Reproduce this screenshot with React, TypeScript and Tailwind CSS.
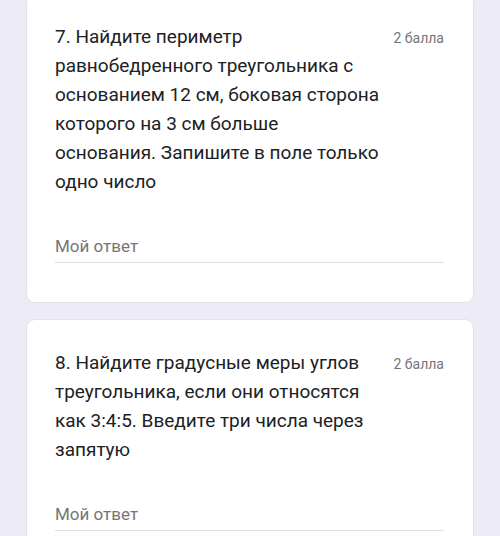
const questions = [
  {
    id: 7,
    lines: [
      "7. Найдите периметр",
      "равнобедренного треугольника с",
      "основанием 12 см, боковая сторона",
      "которого на 3 см больше",
      "основания. Запишите в поле только",
      "одно число",
    ],
    points: "2 балла",
  },
  {
    id: 8,
    lines: [
      "8. Найдите градусные меры углов",
      "треугольника, если они относятся",
      "как 3:4:5. Введите три числа через",
      "запятую",
    ],
    points: "2 балла",
  },
];

function QuestionCard({ lines, points }: { lines: string[]; points: string }) {
  return (
    <div className="rounded-[9px] border border-[#e3e1ec] bg-white pl-[28px] pr-[29px] pt-[28px] pb-[39px]">
      <div className="flex items-baseline justify-between">
        <div className="text-[19px] leading-[29px] text-[#202124]">
          {lines.map((l, i) => (
            <div key={i}>{l}</div>
          ))}
        </div>
        <div className="text-[14px] leading-[29px] text-[#70757a] shrink-0">{points}</div>
      </div>
      <div className="mt-[38px] border-b border-[#e0e0e0] pb-[4px] text-[17px] leading-[24px] text-[#757575]">
        Мой ответ
      </div>
    </div>
  );
}

export default function App() {
  return (
    <div
      className="min-h-screen bg-[#ecebf6] px-[26px] overflow-hidden"
      style={{ fontFamily: "Roboto, 'Noto Sans', sans-serif" }}
    >
      <div className="-mt-[7px] flex flex-col gap-[16px]">
        {questions.map((q) => (
          <QuestionCard key={q.id} lines={q.lines} points={q.points} />
        ))}
      </div>
    </div>
  );
}
